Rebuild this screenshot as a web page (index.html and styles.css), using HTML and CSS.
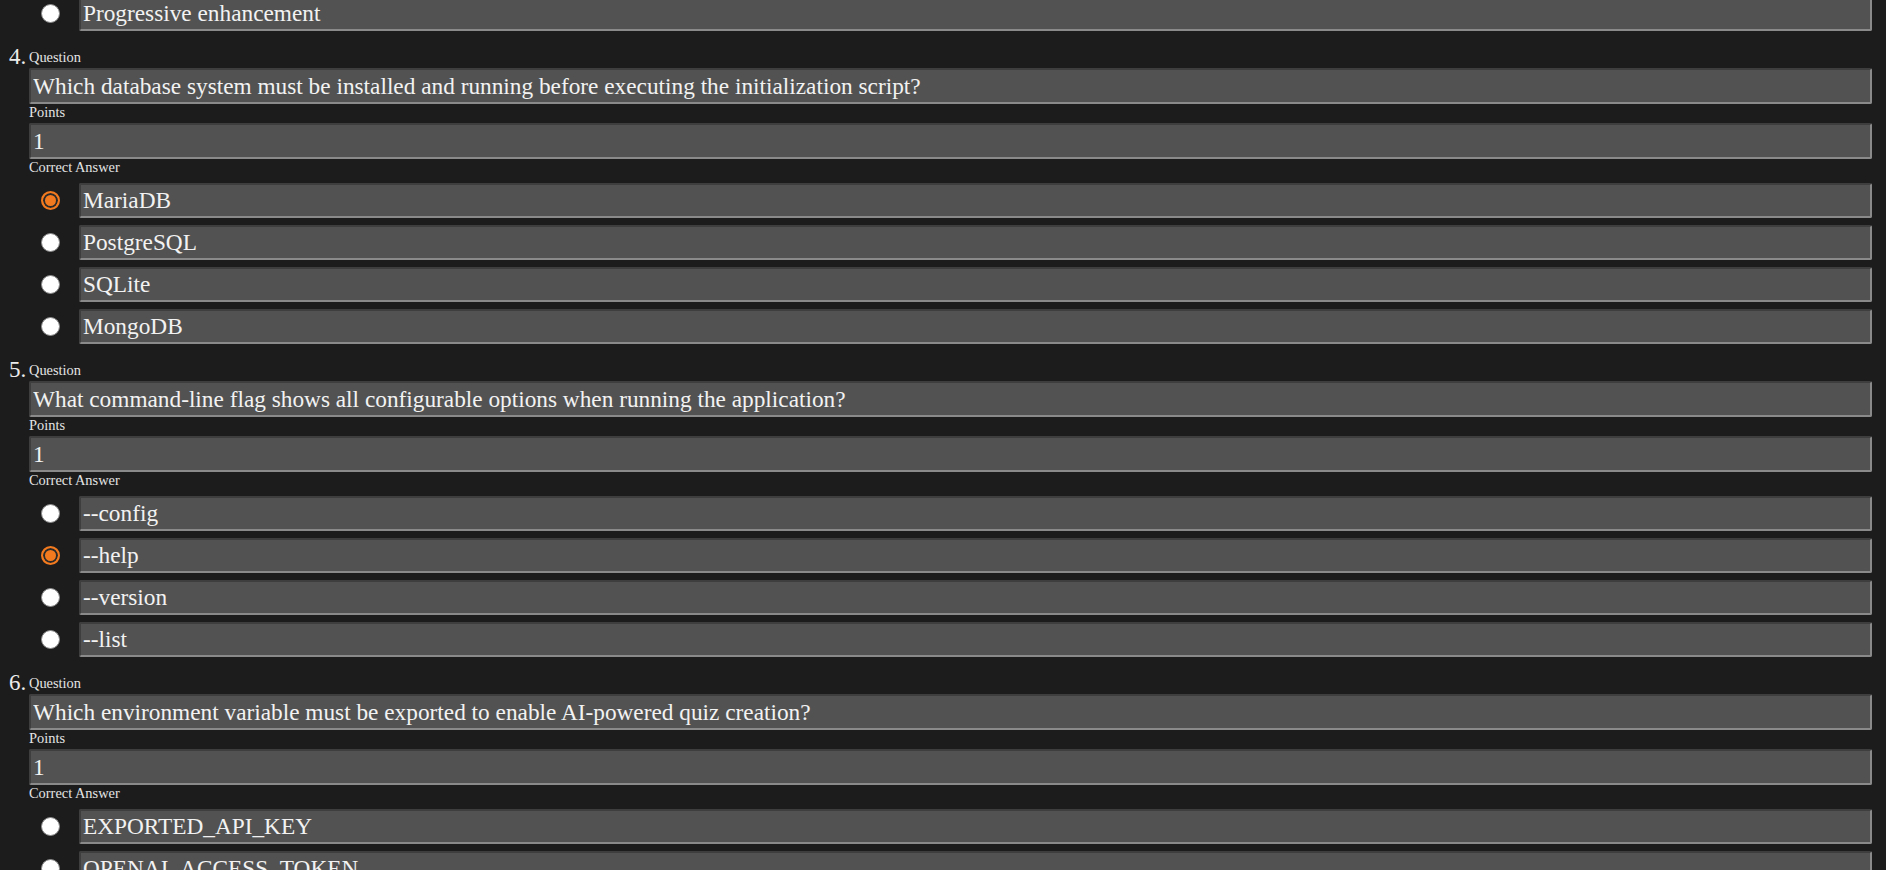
FILE: index.html
```html
<!DOCTYPE html>
<html lang="en">

<head>
    <meta charset="UTF-8">
    <meta name="viewport" content="width=device-width, initial-scale=1.0">
    <title>Quiz editor</title>
    <link rel="stylesheet" href="styles.css">
</head>

<body>

    <div class="quiz">
        <div class="options tail">
            <label class="option"><input type="radio" name="q3"><input class="field" type="text" value="Progressive enhancement"></label>
        </div>

        <div class="question">
            <span class="num">4.</span>
            <div class="body">
                <div class="label">Question</div>
                <input class="field" type="text" value="Which database system must be installed and running before executing the initialization script?">
                <div class="label">Points</div>
                <input class="field" type="text" value="1">
                <div class="label">Correct Answer</div>
                <div class="options">
                    <label class="option"><input type="radio" name="q4" checked><input class="field" type="text" value="MariaDB"></label>
                    <label class="option"><input type="radio" name="q4"><input class="field" type="text" value="PostgreSQL"></label>
                    <label class="option"><input type="radio" name="q4"><input class="field" type="text" value="SQLite"></label>
                    <label class="option"><input type="radio" name="q4"><input class="field" type="text" value="MongoDB"></label>
                </div>
            </div>
        </div>

        <div class="question">
            <span class="num">5.</span>
            <div class="body">
                <div class="label">Question</div>
                <input class="field" type="text" value="What command-line flag shows all configurable options when running the application?">
                <div class="label">Points</div>
                <input class="field" type="text" value="1">
                <div class="label">Correct Answer</div>
                <div class="options">
                    <label class="option"><input type="radio" name="q5"><input class="field" type="text" value="--config"></label>
                    <label class="option"><input type="radio" name="q5" checked><input class="field" type="text" value="--help"></label>
                    <label class="option"><input type="radio" name="q5"><input class="field" type="text" value="--version"></label>
                    <label class="option"><input type="radio" name="q5"><input class="field" type="text" value="--list"></label>
                </div>
            </div>
        </div>

        <div class="question">
            <span class="num">6.</span>
            <div class="body">
                <div class="label">Question</div>
                <input class="field" type="text" value="Which environment variable must be exported to enable AI-powered quiz creation?">
                <div class="label">Points</div>
                <input class="field" type="text" value="1">
                <div class="label">Correct Answer</div>
                <div class="options">
                    <label class="option"><input type="radio" name="q6"><input class="field" type="text" value="EXPORTED_API_KEY"></label>
                    <label class="option"><input type="radio" name="q6"><input class="field" type="text" value="OPENAI_ACCESS_TOKEN"></label>
                    <label class="option"><input type="radio" name="q6"><input class="field" type="text" value="OPENAI_API_KEY"></label>
                    <label class="option"><input type="radio" name="q6"><input class="field" type="text" value="AI_QUIZ_ENABLED"></label>
                </div>
            </div>
        </div>
    </div>

</body>

</html>
```

FILE: styles.css
```css
* {
    padding: 0;
    margin: 0;
    box-sizing: border-box;
}

html,
body {
    background: #1c1c1c;
    color: #ececec;
    font-family: "Liberation Serif", serif;
    overflow: hidden;
}

.quiz {
    padding: 0 14px 0 8px;
    margin-top: -4px;
}

.question {
    display: grid;
    grid-template-columns: 21px 1fr;
    margin-bottom: 18px;
}

.num {
    font-size: 23px;
    line-height: 12px;
    padding: 2px 0 0 1px;
}

.label {
    font-size: 14.4px;
    line-height: 17px;
    height: 19px;
    color: #e4e4e4;
}

.field {
    display: block;
    width: 100%;
    height: 36px;
    background: #525252;
    color: #f2f2f2;
    font-family: "Liberation Serif", serif;
    font-size: 23.3px;
    padding: 0 2px;
    border-style: solid;
    border-width: 2px;
    border-color: #3e3e3e #8a8a8a #8a8a8a #3e3e3e;
    border-radius: 2px;
    outline: none;
}

.options {
    padding-top: 5px;
}

.options.tail {
    margin-left: 21px;
    padding-top: 0;
    margin-bottom: 18px;
}

.option {
    display: flex;
    align-items: center;
    margin-bottom: 7px;
}

.option:last-child {
    margin-bottom: 0;
}

.option .field {
    height: 35px;
}

.option input[type=radio] {
    appearance: none;
    flex: none;
    width: 19px;
    height: 19px;
    margin: 0 19px 0 12px;
    border-radius: 50%;
    background: #fff;
    border: 1px solid #8a8a8a;
}

.option input[type=radio]:checked {
    background: #f37a1f;
    border: 2px solid #f37a1f;
    box-shadow: inset 0 0 0 2px #2a2a2a;
}
```
